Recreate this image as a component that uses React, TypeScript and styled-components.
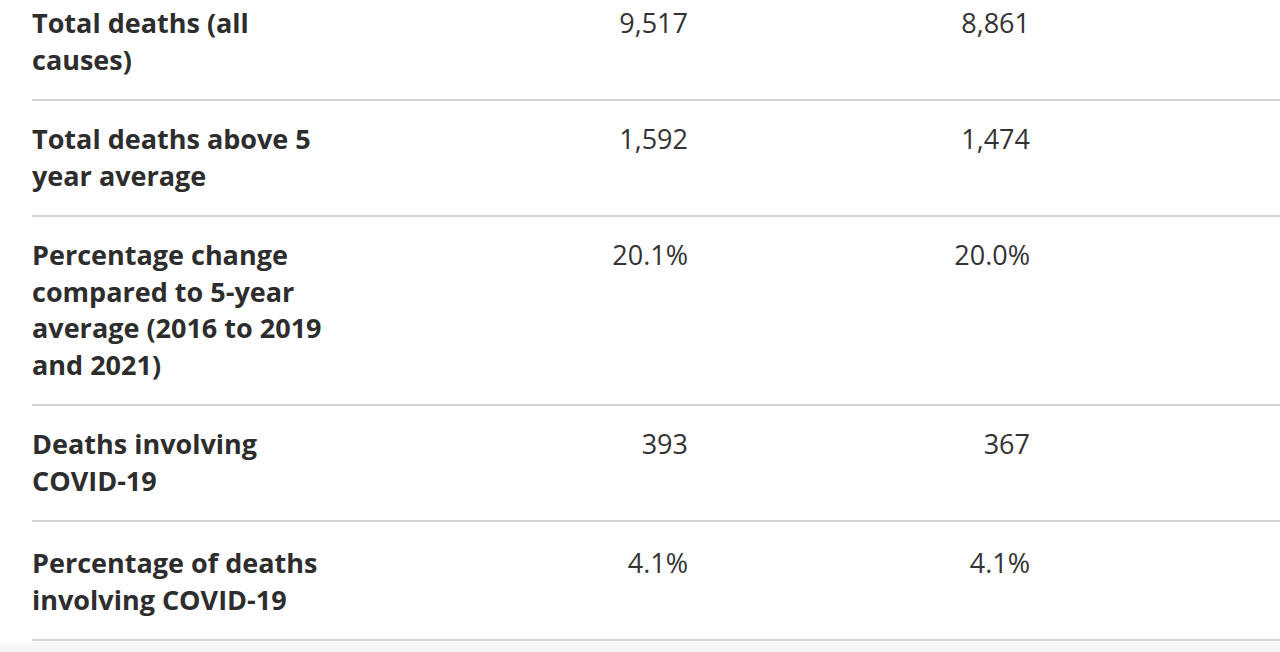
import styled, { createGlobalStyle } from 'styled-components'

const GlobalStyle = createGlobalStyle`
  html, body {
    margin: 0;
    padding: 0;
    background: #fff;
  }
  body {
    font-family: 'Open Sans', 'Noto Sans', sans-serif;
    color: #222;
    overflow: hidden;
  }
`

const Page = styled.div`
  height: 652px;
  overflow: hidden;
  display: flex;
  flex-direction: column;
`

const Scroller = styled.div`
  margin-top: -15px;
  padding-left: 32px;
  flex: 1;
`

const Footer = styled.div`
  height: 10px;
  background: linear-gradient(#fafafa, #f3f3f3);
`

const Table = styled.table`
  width: calc(100% + 40px);
  border-collapse: collapse;
  table-layout: fixed;
  font-size: 27px;
  line-height: 36.5px;
`

const Row = styled.tr`
  border-bottom: 2px solid #d3d3d3;

  &:last-child > * {
    padding-top: 23px;
    padding-bottom: 21px;
  }
`

const LabelCell = styled.th`
  width: 306px;
  padding: 20px 24px 21px 0;
  text-align: left;
  vertical-align: top;
  font-weight: 700;
  color: #2e2d2e;
`

const ValueCell = styled.td<{ $wide?: boolean }>`
  width: ${(p) => (p.$wide ? 'auto' : '326px')};
  padding: 20px 16px 21px 0;
  text-align: right;
  vertical-align: top;
  font-weight: 400;
  color: #333;
`

const rows: [string, string, string][] = [
  ['Total deaths (all causes)', '9,517', '8,861'],
  ['Total deaths above 5 year average', '1,592', '1,474'],
  [
    'Percentage change compared to 5-year average (2016 to 2019 and 2021)',
    '20.1%',
    '20.0%',
  ],
  ['Deaths involving COVID-19', '393', '367'],
  ['Percentage of deaths involving COVID-19', '4.1%', '4.1%'],
]

function App() {
  return (
    <>
      <GlobalStyle />
      <Page>
        <Scroller>
          <Table>
            <tbody>
              {rows.map(([label, a, b]) => (
                <Row key={label}>
                  <LabelCell scope="row">{label}</LabelCell>
                  <ValueCell>{a}</ValueCell>
                  <ValueCell>{b}</ValueCell>
                  <ValueCell $wide />
                </Row>
              ))}
            </tbody>
          </Table>
        </Scroller>
        <Footer />
      </Page>
    </>
  )
}

export default App
